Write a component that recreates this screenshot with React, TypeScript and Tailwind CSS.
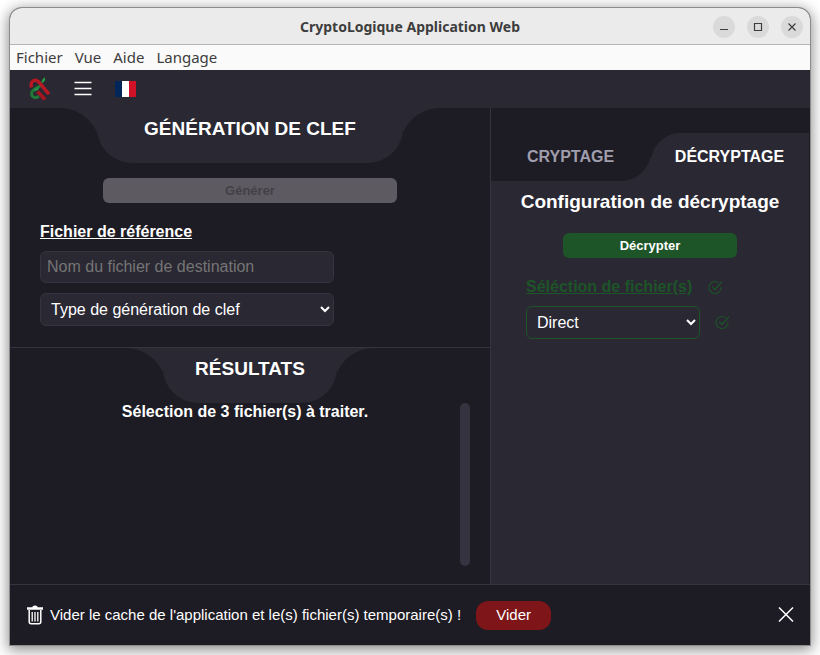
import React from "react";

function Logo() {
  return (
    <svg width="22" height="24" viewBox="0 0 22 24" fill="none" aria-hidden="true">
      <path d="M8.5 14.500 16 22.500" stroke="#a3151f" strokeWidth="3.800" />
      <path d="M12 8.500C9 10.500 2.600 12 2.600 16.500c0 4 4.400 5.300 7.200 2.600" stroke="#1f7a38" strokeWidth="3" />
      <path d="M2.600 10.500C1 6 3.500 3.200 6.500 3.200c3.500 0 4.500 4 13.500 14" stroke="#b81823" strokeWidth="3.400" />
      <path d="M5.500 13.500 9.500 11" stroke="#2a9046" strokeWidth="2.600" />
      <path d="M12.500 6c0-3 1.500-4.500 3.500-5.500.5 3-.5 4.500-3.500 5.500Z" fill="#25a045" />
    </svg>
  );
}

function MenuIcon() {
  return (
    <svg width="18" height="16" viewBox="0 0 18 16" stroke="#fff" strokeWidth="1.500" aria-hidden="true">
      <path d="M.5 1.500h17M.5 7.500h17M.5 13.500h17" />
    </svg>
  );
}

function FrenchFlag() {
  return (
    <svg width="21" height="16" viewBox="0 0 21 16" aria-hidden="true">
      <path fill="#00265a" d="M0 0h7v16H0z" />
      <path fill="#fff" d="M7 0h7v16H7z" />
      <path fill="#d01127" d="M14 0h7v16h-7z" />
    </svg>
  );
}

function TrashIcon() {
  return (
    <svg width="16" height="20" viewBox="0 0 16 20" fill="none" aria-hidden="true">
      <path d="M0 2.200h5.500V1.500Q8-.6 10.500 1.500v.7H16v2.600H0z" fill="#fff" />
      <path d="M2.200 5v11.800q0 2 2 2h7.600q2 0 2-2V5" stroke="#fff" strokeWidth="1.500" />
      <path d="M5.200 7v9.500M8 7v9.500M10.800 7v9.500" stroke="#fff" strokeWidth="1.300" />
    </svg>
  );
}

function CheckIcon() {
  return (
    <svg width="15" height="15" viewBox="0 0 15 15" fill="none" stroke="currentColor" strokeLinecap="round" aria-hidden="true">
      <path d="M13 7.500A6 6 0 1 1 9.800 2.200" strokeWidth="1.100" />
      <path d="m4.500 7 2.500 2.500L13.500 2" strokeWidth="1.200" />
    </svg>
  );
}

function WindowButton({ label, d }: { label: string; d: string }) {
  return (
    <button aria-label={label} className="flex size-[22px] items-center justify-center rounded-full bg-[#dadada]">
      <svg width="10" height="10" viewBox="0 0 10 10" fill="none" stroke="#3d3d3d" strokeWidth="1.200">
        <path d={d} />
      </svg>
    </button>
  );
}

function SectionTab({ title, wide }: { title: string; wide?: boolean }) {
  return (
    <div className="flex justify-center">
      <div className="h-[25px] w-[37px] bg-[radial-gradient(circle_at_0_40px,#1d1b23_39.500px,#2a2833_40.500px)]" />
      <div className={`h-[55px] rounded-b-[35px] bg-[#2a2833] text-center ${wide ? "w-[306px]" : "w-[174px]"}`}>
        <h2 className="pt-[9px] text-[19px] leading-6 font-bold">{title}</h2>
      </div>
      <div className="h-[25px] w-[37px] bg-[radial-gradient(circle_at_37px_40px,#1d1b23_39.500px,#2a2833_40.500px)]" />
    </div>
  );
}

function KeyGeneration() {
  return (
    <section className="h-60 border-b border-[#353340]">
      <SectionTab title="GÉNÉRATION DE CLEF" wide />
      <div className="mt-[15px] flex justify-center">
        <button disabled className="h-[25px] w-[294px] rounded-md bg-[#5d5b61] text-[13px] font-bold text-[#434147]">
          Générer
        </button>
      </div>
      <div className="mt-[17px] flex flex-col items-start gap-[10px] pl-[30px]">
        <a href="#reference" className="-mb-[3px] leading-6 font-bold underline">Fichier de référence</a>
        <input
          aria-label="Nom du fichier de destination"
          placeholder="Nom du fichier de destination"
          className="h-8 w-[294px] rounded-md border border-[#353340] bg-[#2a2833] px-[6px] placeholder:text-[#757575]"
        />
        <select
          aria-label="Type de génération de clef"
          className="h-[33px] w-[294px] rounded-md border border-[#353340] bg-[#2a2833] pl-[6px]"
        >
          <option>Type de génération de clef</option>
        </select>
      </div>
    </section>
  );
}

function Results() {
  return (
    <section className="flex min-h-0 flex-1 flex-col">
      <SectionTab title="RÉSULTATS" />
      <div className="mb-[18px] flex min-h-0 flex-1 px-5">
        <p className="flex-1 text-center leading-[18px] font-bold">Sélection de 3 fichier(s) à traiter.</p>
        <div className="w-[10px] rounded-full bg-[#353340]" />
      </div>
    </section>
  );
}

function Decryption() {
  return (
    <aside className="flex flex-col border-l border-[#353340] bg-[#2a2833]">
      <div className="bg-[#1d1b23] pt-[25px]">
        <div className="relative flex h-12">
          <button className="flex-1 font-bold text-[#a09eac]">
            <span className="relative z-10">CRYPTAGE</span>
          </button>
          <button className="flex-1 border-r border-[#1d1b23] bg-[#2a2833] font-bold">
            <span className="relative z-10">DÉCRYPTAGE</span>
          </button>
          <div className="pointer-events-none absolute inset-y-0 left-1/2 w-[60px] -translate-x-1/2">
            <div className="h-6 bg-[radial-gradient(circle_at_60px_30px,#2a2833_29.500px,#1d1b23_30.500px)]" />
            <div className="h-6 bg-[radial-gradient(circle_at_0_-6px,#1d1b23_29.500px,#2a2833_30.500px)]" />
          </div>
        </div>
      </div>
      <div className="flex flex-1 flex-col border-r border-[#1d1b23] pt-[9px]">
        <h2 className="text-center text-[19px] leading-6 font-bold">Configuration de décryptage</h2>
        <button className="mt-[19px] h-[25px] w-[174px] self-center rounded-md bg-[#1d5428] text-[13px] font-bold">
          Décrypter
        </button>
        <div className="mt-[17px] flex items-center gap-4 pl-[35px] text-[#1d5428]">
          <a href="#files" className="leading-6 font-bold underline">Séléction de fichier(s)</a>
          <CheckIcon />
        </div>
        <div className="mt-[7px] flex items-center gap-[15px] pl-[35px] text-[#1d5428]">
          <select
            aria-label="Mode de décryptage"
            className="h-[33px] w-[174px] rounded-md border border-[#1d5428] bg-[#2a2833] pl-[6px] text-white"
          >
            <option>Direct</option>
          </select>
          <CheckIcon />
        </div>
      </div>
    </aside>
  );
}

export default function App() {
  return (
    <div className="h-screen overflow-hidden bg-white px-[10px] pt-2 pb-[10px] font-['Liberation_Sans',Arial,sans-serif] text-white">
      <div className="flex h-full flex-col overflow-hidden rounded-t-xl bg-[#1d1b23] shadow-[0_0_0_1px_#8c8c8c,0_3px_14px_2px_rgba(0,0,0,0.45)]">
        <header className="grid h-[37px] shrink-0 grid-cols-[1fr_auto_1fr] items-center border-b border-[#b4b4b4] bg-[#ebebeb] px-[7px] pt-px font-['Noto_Sans',sans-serif]">
          <span />
          <h1 className="text-sm font-bold text-[#3d3d3d]">CryptoLogique Application Web</h1>
          <div className="flex justify-end gap-3">
            <WindowButton label="Réduire" d="M1 7.500h8" />
            <WindowButton label="Agrandir" d="M1.500 1.500h7v7h-7z" />
            <WindowButton label="Fermer" d="m1.500 1.500 7 7m0-7-7 7" />
          </div>
        </header>
        <nav className="flex h-[25px] shrink-0 items-center gap-3 bg-[#fafafa] px-[6px] font-['Noto_Sans',sans-serif] text-[15px] text-[#3d3d3d]">
          <button>Fichier</button>
          <button>Vue</button>
          <button>Aide</button>
          <button>Langage</button>
        </nav>
        <div className="flex h-[38px] shrink-0 items-center bg-[#2a2833] pl-[19px]">
          <Logo />
          <button aria-label="Menu" className="ml-[23px]"><MenuIcon /></button>
          <button aria-label="Français" className="ml-[23px]"><FrenchFlag /></button>
        </div>
        <main className="grid min-h-0 flex-1 grid-cols-[3fr_2fr]">
          <div className="flex min-h-0 flex-col">
            <KeyGeneration />
            <Results />
          </div>
          <Decryption />
        </main>
        <footer className="flex h-[61px] shrink-0 items-center border-t border-[#353340] pr-4 pl-[17px] text-[15px]">
          <TrashIcon />
          <p className="ml-[7px]">Vider le cache de l'application et le(s) fichier(s) temporaire(s) !</p>
          <button className="ml-[15px] h-[29px] w-[75px] rounded-xl bg-[#7d1519]">Vider</button>
          <button aria-label="Fermer le message" className="ml-auto">
            <svg width="16" height="16" viewBox="0 0 16 16" stroke="#fff" strokeWidth="1.500">
              <path d="m1 .5 14 14M15 .5l-14 14" />
            </svg>
          </button>
        </footer>
      </div>
    </div>
  );
}
